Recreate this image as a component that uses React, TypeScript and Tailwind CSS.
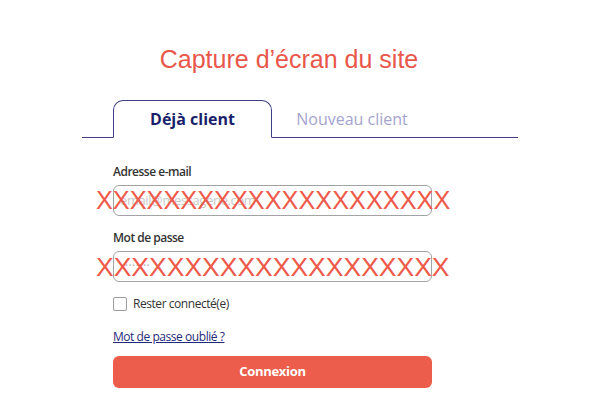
import React from "react";

const XS_1 = "XXXXXXXXXXXXXXXXXXXXX";
const XS_2 = "XXXXXXXXXXXXXXXXXXXX";

function Redacted({ text, size }: { text: string; size: string }) {
  return (
    <span
      className={`pointer-events-none absolute left-[-17px] top-1/2 -translate-y-1/2 whitespace-nowrap leading-none text-[#ee5a4a] font-['Liberation_Sans',Arial,sans-serif] ${size}`}
    >
      {text}
    </span>
  );
}

export default function App() {
  return (
    <div className="h-[400px] w-[600px] overflow-hidden bg-white font-['Open_Sans',sans-serif]">
      {/* Title */}
      <h1 className="pr-[22px] pt-[45px] text-center text-[25px] leading-[28px] text-[#e9574a] font-['Liberation_Sans',Arial,sans-serif]">
        Capture d’écran du site
      </h1>

      {/* Tabs */}
      <div className="mx-auto mt-[27px] flex w-[436px] border-b border-[#3d3f84] pl-[31px]">
        <div className="-mb-px flex h-[38px] w-[159px] items-center justify-center rounded-t-[10px] border border-b-white border-[#3d3f84] bg-white text-[16px] font-bold text-[#1b1f6b]">
          Déjà client
        </div>
        <div className="flex h-[37px] w-[160px] items-center justify-center text-[16px] text-[#a5a4cd]">
          Nouveau client
        </div>
      </div>

      {/* Form */}
      <form className="ml-[113px] mt-[26px] flex w-[319px] flex-col">
        <label className="text-[12px] font-semibold leading-[16px] tracking-[-0.5px] text-[#333]">Adresse e-mail</label>
        <div className="relative mt-[5px]">
          <div className="flex h-[31px] items-center rounded-[6px] border border-[#a3a3a3] px-[6px] text-[13px] tracking-[-0.4px] text-[#c8c8c8]">
            email@messagerie.com
          </div>
          <Redacted text={XS_1} size="text-[25.3px]" />
        </div>

        <label className="mt-[14px] text-[12px] font-semibold leading-[16px] tracking-[-0.5px] text-[#333]">Mot de passe</label>
        <div className="relative mt-[5px]">
          <div className="flex h-[31px] items-center rounded-[6px] border border-[#a3a3a3] px-[11px] text-[7px] tracking-[1px] text-[#b5b5b5]">
            •••••••
          </div>
          <Redacted text={XS_2} size="text-[26.5px]" />
        </div>

        <div className="mt-[14px] flex items-center gap-[6px]">
          <span className="h-[14px] w-[14px] rounded-[2px] border border-[#9a9a9a] bg-white" />
          <span className="text-[12px] leading-[16px] tracking-[-0.45px] text-[#333]">Rester connecté(e)</span>
        </div>

        <a className="mt-[17px] w-fit text-[12px] leading-[16px] tracking-[-0.45px] text-[#1f2a7a] underline">
          Mot de passe oublié ?
        </a>

        <button
          type="button"
          className="mt-[11px] flex h-[32px] items-center justify-center rounded-[6px] bg-[#ec5d4b] text-[13px] font-bold tracking-[-0.3px] text-white"
        >
          Connexion
        </button>
      </form>
    </div>
  );
}
